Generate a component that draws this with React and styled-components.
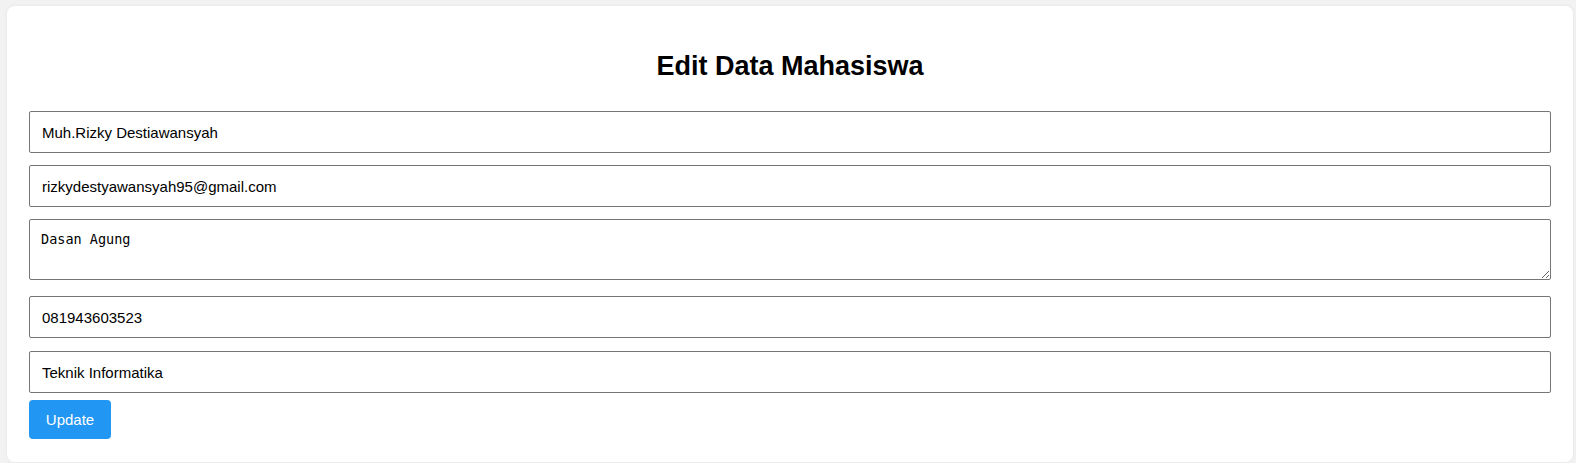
import styled, { createGlobalStyle } from "styled-components";

const GlobalStyle = createGlobalStyle`
  body {
    margin: 0;
    padding: 6px 3px 1px 7px;
    background: #f2f2f2;
    font-family: "Liberation Sans", Arial, sans-serif;
  }
`;

const Card = styled.div`
  background: #fff;
  border-radius: 8px;
  padding: 22px 22px 23px 22px;
  box-shadow: 0 0 4px rgba(0, 0, 0, 0.06);
`;

const Title = styled.h2`
  margin: 23px 0 29px 0;
  text-align: center;
  font-size: 27px;
  font-weight: bold;
  color: #000;
`;

const Form = styled.form`
  display: flex;
  flex-direction: column;
  align-items: flex-start;
`;

const TextField = styled.input`
  box-sizing: border-box;
  width: 100%;
  height: 42px;
  padding: 0 12px;
  margin: 0 0 ${(p) => p.$gap}px 0;
  border: 1px solid #767676;
  border-radius: 2px;
  font-family: "Liberation Sans", Arial, sans-serif;
  font-size: 15px;
  color: #000;
  background: #fff;
`;

const TextArea = styled.textarea`
  box-sizing: border-box;
  width: 100%;
  height: 61px;
  padding: 11px 11px;
  margin: 0 0 16px 0;
  border: 1px solid #767676;
  border-radius: 2px;
  font-family: "DejaVu Sans Mono", "Liberation Mono", monospace;
  font-size: 13.5px;
  color: #000;
  resize: vertical;
`;

const Button = styled.button`
  width: 82px;
  height: 39px;
  border: none;
  border-radius: 4px;
  background: #2196f3;
  color: #fff;
  font-family: "Liberation Sans", Arial, sans-serif;
  font-size: 15px;
  cursor: pointer;
`;

export default function App() {
  return (
    <>
      <GlobalStyle />
      <Card>
        <Title>Edit Data Mahasiswa</Title>
        <Form onSubmit={(e) => e.preventDefault()}>
          <TextField $gap={12} defaultValue="Muh.Rizky Destiawansyah" />
          <TextField $gap={12} defaultValue="rizkydestyawansyah95@gmail.com" />
          <TextArea defaultValue="Dasan Agung" />
          <TextField $gap={13} defaultValue="081943603523" />
          <TextField $gap={7} defaultValue="Teknik Informatika" />
          <Button type="submit">Update</Button>
        </Form>
      </Card>
    </>
  );
}
